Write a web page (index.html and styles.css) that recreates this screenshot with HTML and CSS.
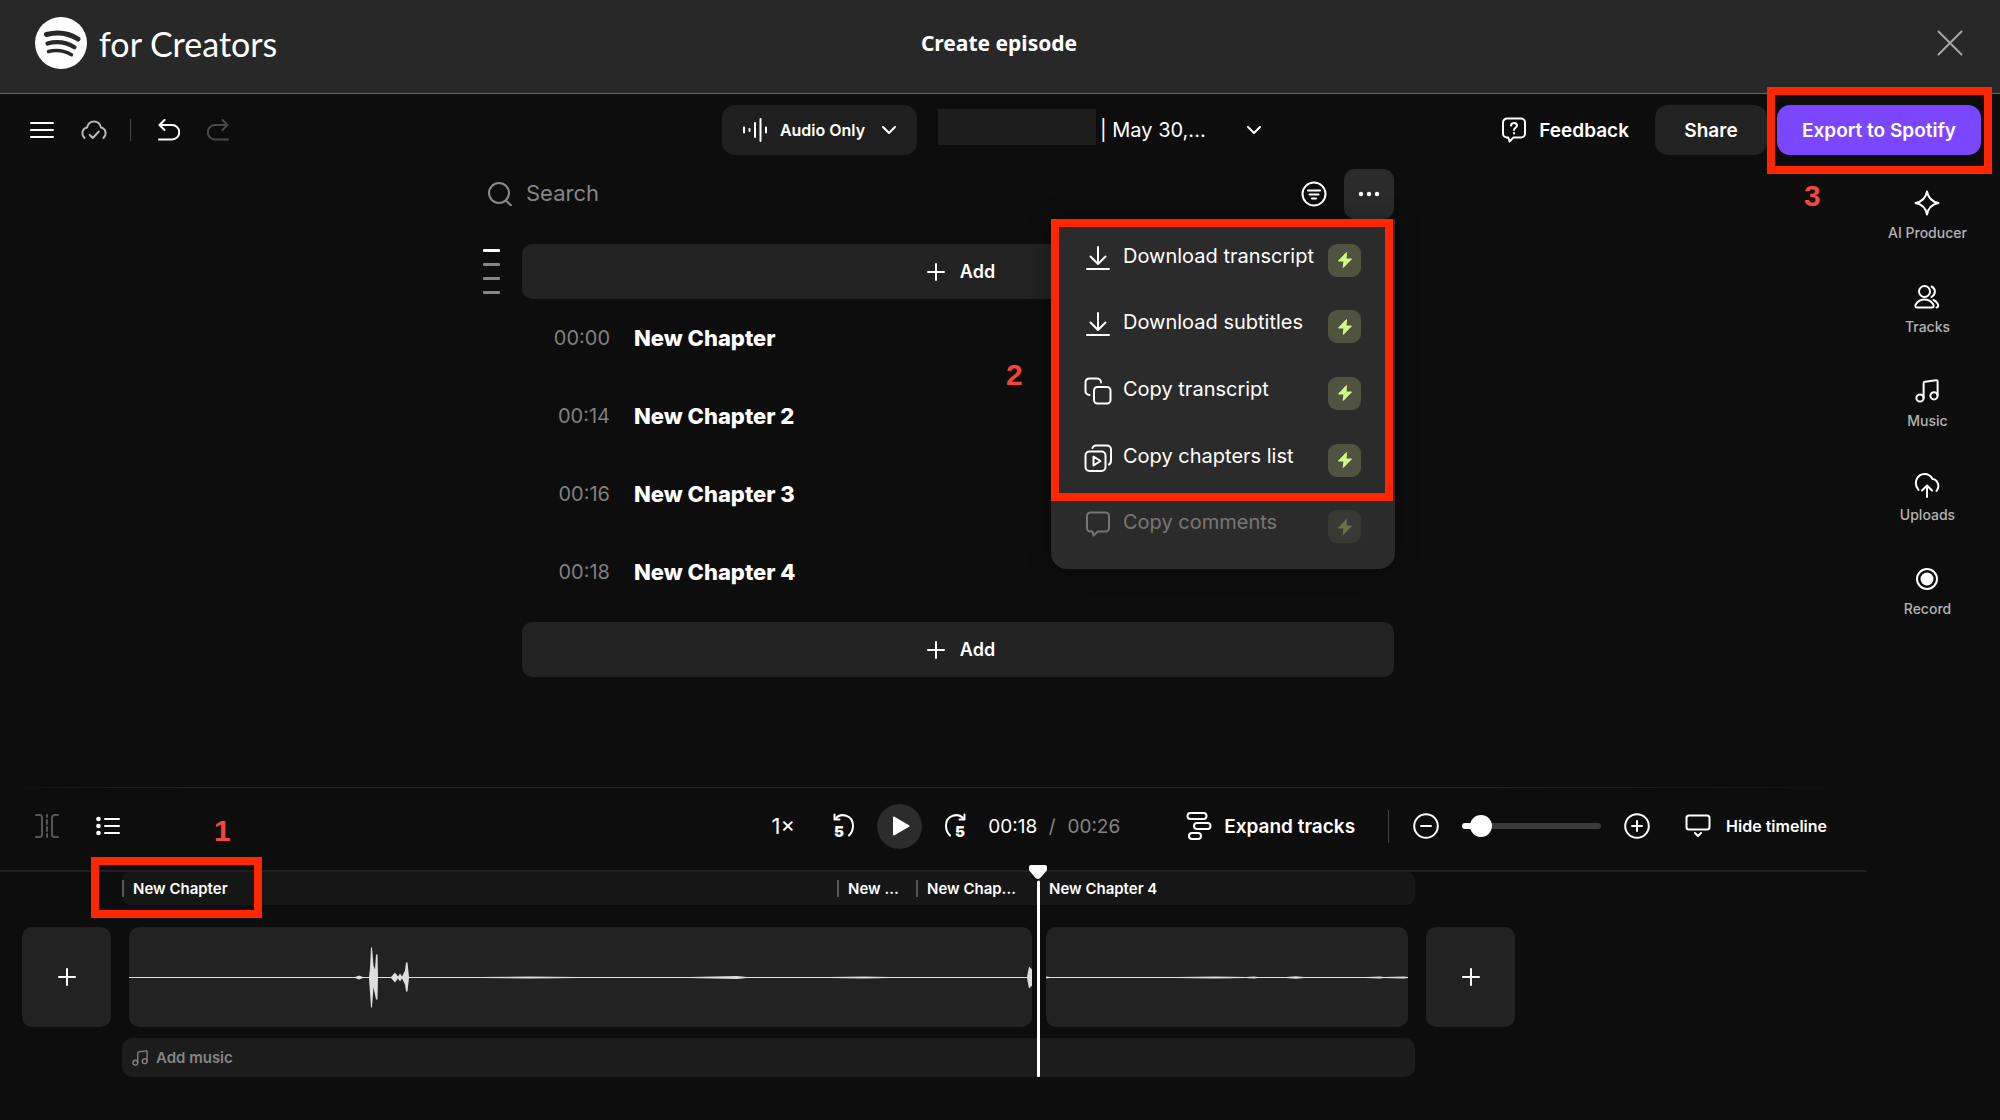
FILE: index.html
```html
<!DOCTYPE html>
<html lang="en">
<head>
  <meta charset="UTF-8">
  <meta name="viewport" content="width=device-width, initial-scale=1.0">
  <title>Create episode</title>
  <link rel="stylesheet" href="styles.css">
</head>
<body>
  <!-- shared icons -->
  <svg class="sprite" aria-hidden="true">
    <symbol id="plus" viewBox="0 0 18 18"><path d="M9 1v16M1 9h16"/></symbol>
    <symbol id="chevron" viewBox="0 0 16 10"><path d="M2 2l6 6 6-6"/></symbol>
    <symbol id="download" viewBox="0 0 24 24"><path d="M12 1v17M4.500 10.500l7.500 7.500 7.500-7.500M1 23h22"/></symbol>
    <symbol id="bolt" viewBox="0 0 16 18"><path d="M9.500 1.500L1.500 10H7l-.8 6.500L14.500 8H9z"/></symbol>
    <symbol id="music" viewBox="0 0 24 24"><circle cx="5" cy="19" r="3.600"/><circle cx="19" cy="16.800" r="3.600"/><path d="M8.600 19V4.500Q8.600 3 10 2.800L21 1.200Q22.600 1 22.600 2.500V16.800"/></symbol>
  </svg>

  <header class="header">
    <a class="logo" href="#">
      <svg width="52" height="52" viewBox="0 0 52 52">
        <circle cx="26" cy="26" r="26" fill="#fff"/>
        <g fill="none" stroke="#282828" stroke-linecap="round">
          <path d="M11.500 17.500Q29 13 43 22" stroke-width="5"/>
          <path d="M12.500 26.500Q27 22.500 39.500 30.200" stroke-width="4.200"/>
          <path d="M13.500 34.500Q26 31.500 36.500 37.800" stroke-width="3.400"/>
        </g>
      </svg>
      <span>for Creators</span>
    </a>
    <h1>Create episode</h1>
    <button class="close" aria-label="Close">
      <svg class="icon" width="26" height="26" viewBox="0 0 26 26"><path d="M1.500 1.500l23 23M24.500 1.500l-23 23"/></svg>
    </button>
  </header>

  <div class="toolbar">
    <div class="tools">
      <button aria-label="Menu"><svg class="icon" width="24" height="18" viewBox="0 0 24 18"><path d="M1 2h22M1 9h22M1 16h22"/></svg></button>
      <button class="cloud" aria-label="Saved"><svg class="icon" width="26" height="20" viewBox="0 0 26 20"><path d="M3.500 18C.5 15 .3 8.800 6 7.500 8 -.5 18 -.5 20 7.500 25.700 8.800 25.500 15 22.500 18M8.800 15l3 3 6-6.500"/></svg></button>
      <span class="divider"></span>
      <button aria-label="Undo"><svg class="icon" width="22" height="22" viewBox="0 0 22 22"><path d="M6.500 1L1.500 6l5 5M1.500 6H14a7 7 0 0 1 0 14.500H1"/></svg></button>
      <button class="redo" aria-label="Redo" disabled><svg class="icon" width="22" height="22" viewBox="0 0 22 22"><path d="M15.500 1l5 5-5 5M20.500 6H8a7 7 0 0 0 0 14.500H21"/></svg></button>
    </div>
    <div class="project">
      <button class="mode">
        <svg class="icon" width="26" height="24" viewBox="0 0 26 24"><path d="M2 9.500v5M7.500 11v2M13 5v14M18.500 1v22M24 9.500v5"/></svg>
        <span>Audio Only</span>
        <svg class="icon" width="16" height="10"><use href="#chevron"/></svg>
      </button>
      <button class="title">
        <span class="redacted"></span>
        <span class="date">| May 30,...</span>
        <svg class="icon" width="16" height="10"><use href="#chevron"/></svg>
      </button>
    </div>
    <div class="actions">
      <button class="feedback">
        <svg class="icon" width="24" height="26" viewBox="0 0 24 26"><path d="M5 1.500h14a4 4 0 0 1 4 4v11a4 4 0 0 1-4 4h-7.500l-4 4-1.200-4H5a4 4 0 0 1-4-4v-11a4 4 0 0 1 4-4zM9 8.600c.2-3.600 6-3.400 6 0 0 2.200-3 2.200-3 4.500M12 16v.6"/></svg>
        Feedback
      </button>
      <button class="share">Share</button>
      <div class="export-wrap">
        <button class="export">Export to Spotify</button>
        <span class="frame frame-export"></span>
        <b class="step step-export">3</b>
      </div>
    </div>
  </div>

  <div class="workspace">
    <main class="editor">
      <section class="transcript">
        <div class="search-row">
          <label for="search" aria-label="Search"><svg class="icon" width="24" height="24" viewBox="0 0 24 24"><circle cx="11" cy="11" r="10"/><path d="M18 18.500l5 5"/></svg></label>
          <input type="text" id="search" placeholder="Search">
          <button aria-label="Filter"><svg class="icon" width="26" height="26" viewBox="0 0 26 26"><circle cx="13" cy="13" r="11.500"/><path d="M7 9.500h12M8.500 13.500h9M11 17.500h4"/></svg></button>
          <div class="more-wrap">
            <button class="more" aria-label="More"><svg width="22" height="6" viewBox="0 0 22 6" fill="currentColor"><circle cx="3" cy="3" r="2.200"/><circle cx="11" cy="3" r="2.200"/><circle cx="19" cy="3" r="2.200"/></svg></button>
            <div class="menu">
              <button class="item"><svg class="icon" width="24" height="24"><use href="#download"/></svg><span>Download transcript</span><i class="badge"><svg width="16" height="18"><use href="#bolt"/></svg></i></button>
              <button class="item"><svg class="icon" width="24" height="24"><use href="#download"/></svg><span>Download subtitles</span><i class="badge"><svg width="16" height="18"><use href="#bolt"/></svg></i></button>
              <button class="item"><svg class="icon" width="28" height="28" viewBox="0 0 28 28"><path d="M5.500 18A4 4 0 0 1 1.500 14V5A4 4 0 0 1 5.500 1.500H13A4 4 0 0 1 17 5.500"/><rect x="10" y="10" width="16.500" height="16.500" rx="3.500"/></svg><span>Copy transcript</span><i class="badge"><svg width="16" height="18"><use href="#bolt"/></svg></i></button>
              <button class="item"><svg class="icon" width="28" height="28" viewBox="0 0 28 28"><rect x="1.500" y="7.500" width="20" height="19.500" rx="4"/><path d="M8.500 4Q9.500 1.500 12 1.500H23A4 4 0 0 1 27 5.500V16Q27 19.500 25 20.500M9.500 12.500v9l7-4.500z"/></svg><span>Copy chapters list</span><i class="badge"><svg width="16" height="18"><use href="#bolt"/></svg></i></button>
              <button class="item" disabled><svg class="icon" width="24" height="26" viewBox="0 0 24 26"><path d="M4.500 1.500h15a3.500 3.500 0 0 1 3.500 3.500v12a3.500 3.500 0 0 1-3.500 3.500H12l-4.500 4-1-4h-2A3.500 3.500 0 0 1 1 17V5a3.500 3.500 0 0 1 3.500-3.500z"/></svg><span>Copy comments</span><i class="badge"><svg width="16" height="18"><use href="#bolt"/></svg></i></button>
              <span class="frame frame-menu"></span>
              <b class="step step-menu">2</b>
            </div>
          </div>
        </div>
        <div class="content">
          <div class="outline"><i class="current"></i><i></i><i></i><i></i></div>
          <div class="chapters">
            <button class="add"><svg class="icon" width="18" height="18"><use href="#plus"/></svg>Add</button>
            <ul>
              <li><time>00:00</time><h2>New Chapter</h2></li>
              <li><time>00:14</time><h2>New Chapter 2</h2></li>
              <li><time>00:16</time><h2>New Chapter 3</h2></li>
              <li><time>00:18</time><h2>New Chapter 4</h2></li>
            </ul>
            <button class="add"><svg class="icon" width="18" height="18"><use href="#plus"/></svg>Add</button>
          </div>
        </div>
      </section>

      <section class="timeline">
        <div class="controls">
          <div class="left-controls">
            <button class="split" aria-label="Split" disabled><svg class="icon" width="24" height="24" viewBox="0 0 24 24"><path d="M1 1h3.500A2.500 2.500 0 0 1 7 3.500v17A2.500 2.500 0 0 1 4.500 23H1M23 1h-3.500A2.500 2.500 0 0 0 17 3.500v17a2.500 2.500 0 0 0 2.500 2.500H23M12 1v2M12 6v4M12 13v4M12 20v3"/></svg></button>
            <button class="list" aria-label="Chapters"><svg class="icon" width="24" height="20" viewBox="0 0 24 20"><path d="M9 3h14M9 10h14M9 17h14"/><g fill="currentColor" stroke="none"><circle cx="2.500" cy="3" r="2.300"/><circle cx="2.500" cy="10" r="2.300"/><circle cx="2.500" cy="17" r="2.300"/></g></svg></button>
            <b class="step step-chapter">1</b>
          </div>
          <div class="playback">
            <button class="speed">1×</button>
            <button class="skip" aria-label="Back 5 seconds"><svg class="icon" width="22" height="26" viewBox="0 0 22 26"><path d="M1.500 1.500v5h5M2 6C8 -1 20 2 20 13c0 4-1.500 7-4 9.500"/><text x="1" y="24">5</text></svg></button>
            <button class="play" aria-label="Play"><svg width="18" height="20" viewBox="0 0 18 20"><path d="M2 1.500v17L16.500 10z" fill="#fff" stroke="#fff" stroke-width="2" stroke-linejoin="round"/></svg></button>
            <button class="skip" aria-label="Forward 5 seconds"><svg class="icon" width="22" height="26" viewBox="0 0 22 26"><path d="M20.500 1.500v5h-5M20 6C14 -1 2 2 2 13c0 4 1.500 7 4 9.500"/><text x="11" y="24">5</text></svg></button>
            <p class="clock">00:18<span>/</span><span>00:26</span></p>
          </div>
          <div class="view">
            <button class="expand"><svg class="icon" width="26" height="30" viewBox="0 0 26 30"><rect x="1.500" y="2" width="19" height="6" rx="3"/><rect x="8" y="12" width="16.500" height="6" rx="3"/><rect x="3" y="22" width="12" height="6" rx="3"/></svg>Expand tracks</button>
            <span class="divider"></span>
            <div class="zoom">
              <button aria-label="Zoom out"><svg class="icon" width="26" height="26" viewBox="0 0 26 26"><circle cx="13" cy="13" r="11.800"/><path d="M8 13h10"/></svg></button>
              <input type="range" aria-label="Zoom" min="0" max="100" value="7">
              <button aria-label="Zoom in"><svg class="icon" width="26" height="26" viewBox="0 0 26 26"><circle cx="13" cy="13" r="11.800"/><path d="M8 13h10M13 8v10"/></svg></button>
            </div>
            <button class="hide"><svg class="icon" width="26" height="24" viewBox="0 0 26 24"><rect x="1.500" y="1.500" width="23" height="14" rx="2.500"/><path d="M10 19l3 3 3-3"/></svg>Hide timeline</button>
          </div>
        </div>

        <div class="tracks">
          <ol class="markers">
            <li>New Chapter</li>
            <li>New ...</li>
            <li>New Chap...</li>
            <li>New Chapter 4</li>
          </ol>
          <div class="clips">
            <button class="insert" aria-label="Insert before"><svg class="icon" width="18" height="18"><use href="#plus"/></svg></button>
            <div class="clip clip-main">
              <svg viewBox="0 -.5 903 100" preserveAspectRatio="none">
                <path d="M0 49.500H222L226 49.500 230 48 234 49.500H240L241 40 242 20 243 20 244.500 38 246 42 247 27 248.500 27 249 49.500H262L266 45 269 49 271 46 273 49 276 43 277 35 278.500 35 280 49.500H350L400 49 450 49.500H560L608 48.500 618 49.500H700L735 49 760 49.500H898L900 39 903 42V58L900 61 898 50.500H760L735 51 700 50.500H618L608 51.500 560 50.500H450L400 51 350 50.500H280L278.500 64 277 64 276 57 273 51 271 54 269 51 266 55 262 50.500H249L248.500 72 247 72 244.500 60 243 80 242 80 240 50.500H234L230 52 226 50.500H0z"/>
              </svg>
            </div>
            <div class="clip clip-end">
              <svg viewBox="0 -.5 362 100" preserveAspectRatio="none">
                <path d="M0 49L4 49.500H130L170 49 200 49.500 208 49 212 49.500H240L250 48.800 258 49.500H320L334 49 338 49.500 358 49 362 49.500V50.500L358 51 338 50.500 334 51 320 50.500H258L250 51.200 240 50.500H212L208 51 200 50.500 170 51 130 50.500H4L0 51z"/>
              </svg>
            </div>
            <button class="insert" aria-label="Insert after"><svg class="icon" width="18" height="18"><use href="#plus"/></svg></button>
          </div>
          <button class="add-music"><svg class="icon" width="16" height="16"><use href="#music"/></svg>Add music</button>
          <span class="frame frame-chapter"></span>
          <div class="playhead">
            <svg width="18" height="14" viewBox="0 0 18 14"><path d="M2 0h14q2 0 2 2v2q0 1-.6 2L11.500 12.700Q9 15.300 6.500 12.700L.6 6Q0 5 0 4V2Q0 0 2 0z" fill="#fff"/></svg>
          </div>
        </div>
      </section>
    </main>

    <nav class="sidebar">
      <a href="#"><svg class="icon" width="26" height="26" viewBox="0 0 26 26"><path d="M13 1.500C14.300 8.500 17.500 11.700 24.500 13 17.500 14.300 14.300 17.500 13 24.500 11.700 17.500 8.500 14.300 1.500 13 8.500 11.700 11.700 8.500 13 1.500z"/></svg>AI Producer</a>
      <a href="#"><svg class="icon" width="26" height="26" viewBox="0 0 26 26"><circle cx="10.500" cy="7.500" r="5.500"/><path d="M17.500 2.500c4.500 2 4.500 8 0 10.500M3 23.500C1 23.500 1 21.500 2 20c4-6 13-6 17 0 1 1.500 1 3.500-1 3.500zM19.500 16q2.500 1 4.200 3.800c1 1.700.5 3.700-1.200 3.700"/></svg>Tracks</a>
      <a href="#"><svg class="icon" width="24" height="26"><use href="#music"/></svg>Music</a>
      <a href="#"><svg class="icon" width="26" height="26" viewBox="0 0 26 26"><path d="M4.500 18C-1 11 3 2 10.500 2c3.500 0 6.500 2 8 5 5 .5 8 7 4 12M13 25V14M8 18.500l5-5 5 5"/></svg>Uploads</a>
      <a href="#"><svg class="icon" width="26" height="26" viewBox="0 0 26 26"><circle cx="13" cy="13" r="10"/><circle cx="13" cy="13" r="6.500" fill="currentColor" stroke="none"/></svg>Record</a>
    </nav>
  </div>
</body>
</html>
```
FILE: styles.css
```css
* {
  box-sizing: border-box;
}
body {
  margin: 0;
  min-height: 100vh;
  display: flex;
  flex-direction: column;
  background-color: #0d0d0d;
  color: #fff;
  font-family: Inter, sans-serif;
  font-size: 19px;
}
h1, h2, p, ul, ol {
  margin: 0;
  padding: 0;
  list-style: none;
}
a {
  color: inherit;
  text-decoration: none;
}
button {
  display: flex;
  align-items: center;
  justify-content: center;
  padding: 0;
  border: none;
  background: none;
  color: inherit;
  font: inherit;
  font-weight: 600;
  white-space: nowrap;
  cursor: pointer;
}
svg {
  display: block;
  flex: none;
}
.sprite {
  position: absolute;
  width: 0;
  height: 0;
}
.icon {
  fill: none;
  stroke: currentColor;
  stroke-width: 2;
  stroke-linecap: round;
  stroke-linejoin: round;
}
.divider {
  width: 1px;
  background-color: #444;
}

/* header */
.header {
  display: grid;
  grid-template-columns: 1fr auto 1fr;
  align-items: center;
  height: 94px;
  padding: 0 37px 7px 35px;
  background-color: #282828;
  border-bottom: 1px solid #666;
}
.logo {
  display: flex;
  align-items: center;
  gap: 12px;
  font-family: Lato, sans-serif;
  font-size: 34px;
}
.header h1 {
  font-family: "Noto Sans", sans-serif;
  font-size: 21px;
  font-weight: 700;
}
.close {
  justify-self: end;
  color: #a7a7a7;
}

/* toolbar */
.toolbar {
  display: grid;
  grid-template-columns: 1fr auto 1fr;
  align-items: center;
  height: 72px;
  padding: 0 19px;
}
.tools, .project, .actions {
  display: flex;
  align-items: center;
}
.tools {
  gap: 27px;
  padding-left: 11px;
}
.tools .divider {
  height: 22px;
  margin-left: -4px;
}
.cloud {
  color: #b8b8b8;
}
.redo {
  color: #4a4a4a;
}
.project {
  gap: 21px;
}
.mode {
  gap: 12px;
  width: 195px;
  height: 50px;
  border-radius: 13px;
  background-color: #1f1f1f;
  font-size: 16px;
}
.mode span {
  margin-right: 4px;
}
.title {
  width: 340px;
  justify-content: flex-start;
  font-size: 20px;
  font-weight: 400;
}
.redacted {
  width: 158px;
  height: 36px;
  margin: 0 4px 6px 0;
  background-color: #1d1d1d;
}
.date {
  flex: 1;
  text-align: left;
}
.title .icon {
  margin-right: 16px;
}
.actions {
  justify-content: flex-end;
}
.feedback {
  gap: 13px;
  margin-right: 26px;
}
.share, .export {
  height: 50px;
  border-radius: 13px;
}
.share {
  width: 112px;
  margin-right: 10px;
  background-color: #222;
}
.export-wrap {
  position: relative;
}
.export {
  width: 204px;
  background-color: #7a47ff;
}

/* numbered callouts */
.frame {
  position: absolute;
  border: 8px solid #ff2600;
  pointer-events: none;
}
.frame-export {
  inset: -18px -11px -19px -10px;
}
.frame-menu {
  inset: 0 2px 68px 0;
}
.frame-chapter {
  left: 91px;
  top: -15px;
  width: 171px;
  height: 61px;
}
.step {
  position: absolute;
  color: #f4473c;
  font-family: "Liberation Sans", sans-serif;
  font-size: 30px;
  line-height: 34px;
}
.step-export {
  left: 27px;
  top: 74px;
}
.step-menu {
  left: -45px;
  top: 139px;
}
.step-chapter {
  left: 214px;
  top: 27px;
}

/* workspace */
.workspace {
  flex: 1;
  display: grid;
  grid-template-columns: 1fr 133px;
}
.editor {
  display: flex;
  flex-direction: column;
  justify-content: space-between;
}
.transcript {
  width: 921px;
  margin: 0 auto;
  padding: 3px 0 0 10px;
}
.search-row {
  display: flex;
  align-items: center;
  height: 50px;
}
.search-row label {
  margin: 0 14px 0 5px;
  color: #8a8a8a;
}
.search-row input {
  flex: 1;
  padding: 0 0 2px;
  border: none;
  outline: none;
  background: none;
  color: #fff;
  font: inherit;
  font-size: 22px;
}
.search-row input::placeholder {
  color: #858585;
  opacity: 1;
}
.more-wrap {
  position: relative;
  margin-left: 17px;
}
.more {
  width: 50px;
  height: 50px;
  border-radius: 11px;
  background-color: #2b2b2b;
}
.menu {
  position: absolute;
  z-index: 2;
  top: 50px;
  right: -1px;
  display: flex;
  flex-direction: column;
  width: 344px;
  height: 350px;
  padding: 8px 34px 9px 33px;
  border-radius: 0 0 16px 16px;
  background-color: #2b2b2b;
  box-shadow: 0 0 24px rgba(0, 0, 0, 0.3);
}
.item {
  flex: 1;
  display: grid;
  grid-template-columns: 28px 1fr 33px;
  align-items: center;
  justify-items: center;
  column-gap: 11px;
  width: 100%;
  font-size: 20px;
  font-weight: 400;
}
.item > .icon {
  margin-bottom: 5px;
}
.item span {
  justify-self: start;
  padding-bottom: 9px;
}
.item:disabled {
  opacity: 0.35;
}
.badge {
  display: grid;
  place-items: center;
  width: 33px;
  height: 33px;
  border-radius: 9px;
  background-color: #4f5340;
}
.badge svg {
  fill: #d2fb86;
  stroke: #d2fb86;
  stroke-linejoin: round;
}

.content {
  display: flex;
  gap: 22px;
  padding-top: 25px;
}
.outline {
  display: flex;
  flex-direction: column;
  gap: 11px;
  width: 17px;
  padding-top: 5px;
}
.outline i {
  height: 3px;
  border-radius: 1px;
  background-color: #858585;
}
.outline .current {
  background-color: #fff;
}
.chapters {
  flex: 1;
}
.add {
  gap: 15px;
  width: 100%;
  height: 55px;
  padding-left: 6px;
  border-radius: 10px;
  background-color: #222;
  font-size: 18px;
}
.chapters ul {
  padding-bottom: 11px;
}
.chapters li {
  display: flex;
  align-items: center;
  gap: 24px;
  height: 78px;
}
.chapters time {
  width: 88px;
  color: #808080;
  font-size: 20px;
  text-align: right;
}
.chapters h2 {
  font-size: 22px;
  font-weight: 800;
}

/* sidebar */
.sidebar {
  display: flex;
  flex-direction: column;
  align-items: center;
  gap: 34px;
  padding: 24px 12px 0 0;
  font-size: 14px;
  font-weight: 500;
}
.sidebar a {
  display: flex;
  flex-direction: column;
  align-items: center;
  gap: 8px;
  height: 60px;
  color: #b3b3b3;
}
.sidebar .icon {
  color: #fff;
}

/* timeline */
.timeline {
  padding-bottom: 43px;
}
.controls {
  position: relative;
  display: flex;
  align-items: center;
  height: 85px;
  padding: 0 40px 5px 35px;
  border-bottom: 2px solid #202020;
}
.controls::before {
  content: "";
  position: absolute;
  inset: 0 0 auto;
  height: 1px;
  background: linear-gradient(to right, #0d0d0d, #262626 10%, #262626 80%, #0d0d0d);
}
.left-controls, .playback, .view, .zoom {
  display: flex;
  align-items: center;
}
.left-controls {
  gap: 37px;
}
.split {
  color: #555;
}
.playback {
  margin-left: auto;
}
.speed {
  width: 26px;
  margin-right: 37px;
  font-size: 22px;
  font-weight: 400;
}
.skip svg {
  overflow: visible;
}
.skip text {
  fill: currentColor;
  stroke: none;
  font-size: 15px;
  font-weight: 900;
}
.play {
  width: 45px;
  height: 45px;
  margin: 0 22px;
  padding-left: 3px;
  border-radius: 50%;
  background-color: #2c2c2c;
}
.clock {
  width: 132px;
  margin-left: 22px;
  display: flex;
  justify-content: space-between;
}
.clock span {
  color: #858585;
}
.view {
  margin-left: 66px;
}
.expand {
  gap: 12px;
  margin-right: 33px;
}
.view .divider {
  height: 33px;
  margin-right: 24px;
}
.zoom input {
  appearance: none;
  width: 139px;
  height: 22px;
  margin: 0 23px;
  background: none;
}
.zoom input::-webkit-slider-runnable-track {
  height: 6px;
  border-radius: 3px;
  background: linear-gradient(to right, #fff 12%, #3a3a3a 12%);
}
.zoom input::-webkit-slider-thumb {
  appearance: none;
  width: 22px;
  height: 22px;
  margin-top: -8px;
  border-radius: 50%;
  background-color: #fff;
}
.hide {
  gap: 15px;
  margin-left: 35px;
  font-size: 16px;
}

.tracks {
  position: relative;
}
.markers {
  display: grid;
  grid-template-columns: 715px 79px 122px 1fr;
  width: 1293px;
  height: 33px;
  margin-left: 122px;
  border-radius: 8px;
  background-color: #161616;
  font-size: 15px;
  font-weight: 600;
}
.markers li {
  display: flex;
  align-items: center;
  gap: 9px;
  white-space: nowrap;
}
.markers li::before {
  content: "";
  width: 2px;
  height: 17px;
  background-color: #555;
}
.clips {
  display: flex;
  gap: 18px;
  padding: 22px 0 11px 22px;
}
.insert, .clip {
  height: 100px;
  border-radius: 10px;
  background-color: #222;
  overflow: hidden;
}
.insert {
  width: 89px;
}
.clip svg {
  width: 100%;
  height: 100%;
  fill: #dedede;
}
.clip-main {
  width: 903px;
  margin-right: -4px;
}
.clip-end {
  width: 362px;
}
.add-music {
  justify-content: flex-start;
  gap: 8px;
  width: 1293px;
  height: 39px;
  margin-left: 122px;
  padding-left: 10px;
  border-radius: 10px;
  background-color: #1c1c1c;
  color: #858585;
  font-size: 15px;
}
.playhead {
  position: absolute;
  left: 1029px;
  top: -7px;
  bottom: 0;
  width: 18px;
}
.playhead::after {
  content: "";
  position: absolute;
  top: 16px;
  bottom: 0;
  left: 8px;
  width: 3px;
  border-radius: 1px;
  background-color: #fff;
}
```
